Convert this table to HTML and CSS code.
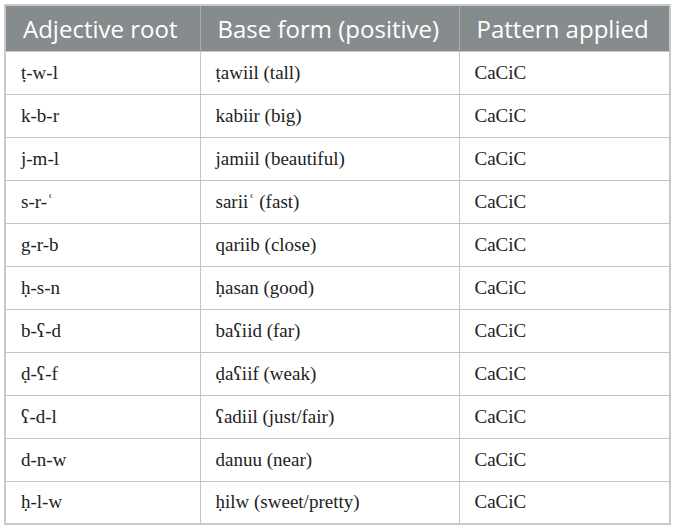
FILE: index.html
```html
<!DOCTYPE html>
<html>
<head>
<meta charset="utf-8">
<link rel="stylesheet" href="styles.css">
</head>
<body>
<table class="tbl">
  <colgroup>
    <col class="c1"><col class="c2"><col class="c3">
  </colgroup>
  <thead>
    <tr><th>Adjective root</th><th>Base form (positive)</th><th>Pattern applied</th></tr>
  </thead>
  <tbody>
    <tr><td>ṭ-w-l</td><td>ṭawiil (tall)</td><td>CaCiC</td></tr>
    <tr><td>k-b-r</td><td>kabiir (big)</td><td>CaCiC</td></tr>
    <tr><td>j-m-l</td><td>jamiil (beautiful)</td><td>CaCiC</td></tr>
    <tr><td>s-r-ʿ</td><td>sariiʿ (fast)</td><td>CaCiC</td></tr>
    <tr><td>g-r-b</td><td>qariib (close)</td><td>CaCiC</td></tr>
    <tr><td>ḥ-s-n</td><td>ḥasan (good)</td><td>CaCiC</td></tr>
    <tr><td>b-ʕ-d</td><td>baʕiid (far)</td><td>CaCiC</td></tr>
    <tr><td>ḍ-ʕ-f</td><td>ḍaʕiif (weak)</td><td>CaCiC</td></tr>
    <tr><td>ʕ-d-l</td><td>ʕadiil (just/fair)</td><td>CaCiC</td></tr>
    <tr><td>d-n-w</td><td>danuu (near)</td><td>CaCiC</td></tr>
    <tr><td>ḥ-l-w</td><td>ḥilw (sweet/pretty)</td><td>CaCiC</td></tr>
  </tbody>
</table>
</body>
</html>
```
FILE: styles.css
```css
html, body {
  margin: 0;
  padding: 0;
  background: #ffffff;
}
body {
  padding: 4px 0 0 4px;
}
.tbl {
  border-collapse: collapse;
  width: 665px;
  table-layout: fixed;
  border: 2px solid #c9c9c9;
}
.c1 { width: 195px; }
.c2 { width: 259px; }
.c3 { width: 211px; }
.tbl th {
  background: #868b8e;
  color: #ffffff;
  font-family: "Open Sans", sans-serif;
  font-weight: 400;
  font-size: 24px;
  text-align: left;
  height: 46px;
  padding: 0 0 0 17px;
  border-left: 1px solid #a9adb0;
  border-right: 1px solid #a9adb0;
  box-sizing: border-box;
  white-space: nowrap;
}
.tbl td {
  font-family: "Liberation Serif", serif;
  font-size: 19px;
  color: #222222;
  height: 43px;
  padding: 0 0 0 15px;
  border: 1px solid #c4c4c4;
  box-sizing: border-box;
  vertical-align: middle;
}
```
